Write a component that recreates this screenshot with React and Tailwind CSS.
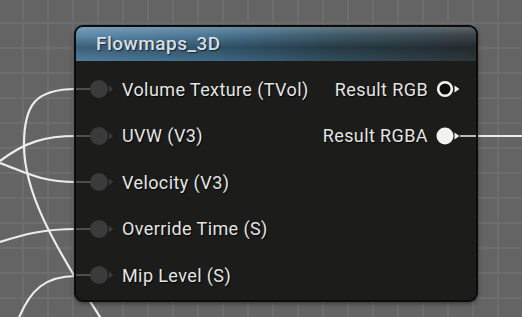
import React from 'react'

const inputs = [
  'Volume Texture (TVol)',
  'UVW (V3)',
  'Velocity (V3)',
  'Override Time (S)',
  'Mip Level (S)',
]

const outputs = [
  { label: 'Result RGB', filled: false, linked: false },
  { label: 'Result RGBA', filled: true, linked: true },
]

function InputPin() {
  return (
    <svg width="40" height="20" viewBox="0 0 40 20" className="shrink-0">
      <line x1="0" y1="10" x2="16" y2="10" stroke="#4f4f4f" strokeWidth="2" />
      <circle cx="23" cy="10" r="9" fill="#3a3b3a" />
      <polygon points="33,6.5 37,10 33,13.5" fill="#3a3b3a" />
    </svg>
  )
}

function OutputPin({ filled, linked }) {
  return (
    <svg width="44" height="20" viewBox="0 0 44 20" className="shrink-0">
      {linked && <line x1="28" y1="10" x2="44" y2="10" stroke="#b8b8b8" strokeWidth="2" />}
      {filled ? (
        <circle cx="13" cy="10" r="8.5" fill="#f2f2f2" />
      ) : (
        <circle cx="13" cy="10" r="6.8" fill="#0d0d0d" stroke="#f0f0f0" strokeWidth="2.6" />
      )}
      <polygon points="22.5,6.5 27.5,10 22.5,13.5" fill="#f0f0f0" />
    </svg>
  )
}

export default function App() {
  return (
    <div className="relative w-[522px] h-[317px] overflow-hidden bg-[#646464] [background-image:linear-gradient(to_right,#6d6d6d_2px,transparent_2px),linear-gradient(to_bottom,#6d6d6d_2px,transparent_2px)] [background-size:25px_25px] [background-position:22px_22px] font-['Roboto','Liberation_Sans',sans-serif]">
      {/* wires */}
      <svg className="absolute inset-0" width="522" height="317" viewBox="0 0 522 317">
        <g fill="none" stroke="#ececec" strokeWidth="2.2">
          <path d="M76 89 C 35 89, 24 105, 24 145 C 24 190, 50 240, 102 320" />
          <path d="M76 136 C 45 136, 25 142, 0 161" />
          <path d="M76 182 C 40 182, 25 172, 0 163" />
          <path d="M76 229 C 45 229, 25 234, 0 242" />
          <path d="M76 276 C 45 276, 30 290, 18 320" />
          <path d="M476 136 L 522 136" />
        </g>
      </svg>

      {/* node */}
      <div className="absolute left-[74px] top-[25px] w-[404px] h-[277px] rounded-[9px] border-2 border-[#0c0c0c] bg-[#1c1d1b] overflow-hidden shadow-[0_2px_4px_rgba(0,0,0,0.4)]">
        <div className="relative h-[34px] flex items-center pl-5 bg-[linear-gradient(to_right,#5584a6_0%,#416f8e_35%,#34505f_65%,#30383d_100%)]">
          <div className="absolute inset-0 bg-[linear-gradient(to_bottom,rgba(255,255,255,0.22)_0%,rgba(255,255,255,0.05)_25%,rgba(0,0,0,0.28)_60%,rgba(0,0,0,0.05)_100%)]" />
          <span className="relative text-[19px] font-medium text-[#d6dfe6] tracking-[0.5px] [text-shadow:1px_1px_1px_rgba(0,0,0,0.6)]">
            Flowmaps_3D
          </span>
        </div>

        <div className="flex justify-between pt-[5px]">
          <div className="flex flex-col">
            {inputs.map((label) => (
              <div key={label} className="h-[46.5px] flex items-center">
                <InputPin />
                <span className="ml-[6px] text-[18px] tracking-[0.4px] text-[#e4e4e4] [text-shadow:1px_1px_1px_rgba(0,0,0,0.9)]">
                  {label}
                </span>
              </div>
            ))}
          </div>
          <div className="flex flex-col">
            {outputs.map((o) => (
              <div key={o.label} className="h-[46.5px] flex items-center justify-end">
                <span className="mr-[4px] text-[18px] tracking-[0.4px] text-[#e4e4e4] [text-shadow:1px_1px_1px_rgba(0,0,0,0.9)]">
                  {o.label}
                </span>
                <OutputPin filled={o.filled} linked={o.linked} />
              </div>
            ))}
          </div>
        </div>
      </div>
    </div>
  )
}
